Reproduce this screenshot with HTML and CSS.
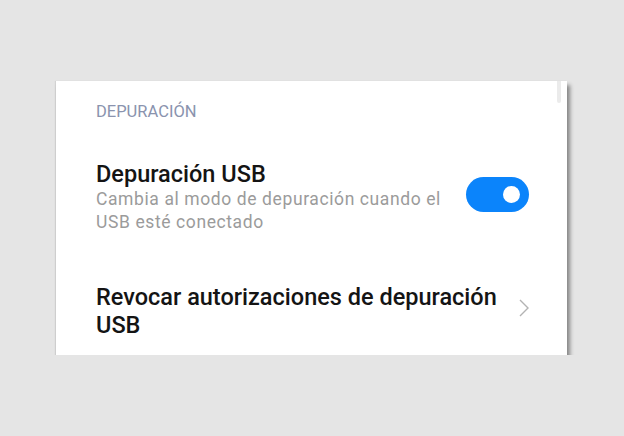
FILE: index.html
```html
<!DOCTYPE html>
<html lang="es">
<head>
  <meta charset="UTF-8" />
  <meta name="viewport" content="width=device-width, initial-scale=1.0"/>
  <title>Depuración</title>
  <link rel="stylesheet" href="styles.css">
</head>
<body>
  <div class="page">
    <div class="card">
      <div class="scrollbar"></div>
      <p class="section-title">DEPURACIÓN</p>

      <div class="row row-toggle">
        <div class="row-text">
          <p class="row-title">Depuración USB</p>
          <p class="row-sub">Cambia al modo de depuración cuando el USB esté conectado</p>
        </div>
        <div class="switch on"><span class="knob"></span></div>
      </div>

      <div class="row row-link">
        <div class="row-text">
          <p class="row-title">Revocar autorizaciones de depuración USB</p>
        </div>
        <svg class="chevron" width="10" height="18" viewBox="0 0 10 18">
          <path d="M1 1 L9 9 L1 17" fill="none" stroke="#b3b3b3" stroke-width="1.4"/>
        </svg>
      </div>
    </div>
  </div>
</body>
</html>
```

FILE: styles.css
```css
body {
  font-family: Roboto, 'Noto Sans', sans-serif;
  background-color: #e5e5e5;
  margin: 0;
  padding: 0;
}
p {
  margin: 0;
}
.page {
  padding: 81px 0 0 56px;
}
.card {
  position: relative;
  width: 511px;
  height: 274px;
  background-color: white;
  box-shadow: 3px 4px 4px rgba(0, 0, 0, 0.42), -1px 0 1px rgba(0, 0, 0, 0.08);
  padding: 21px 38px 0 40px;
  box-sizing: border-box;
}
.scrollbar {
  position: absolute;
  top: 0;
  right: 6px;
  width: 4px;
  height: 22px;
  border-radius: 0 0 2px 2px;
  background-color: #ebebeb;
}
.section-title {
  font-size: 16.5px;
  line-height: 20px;
  color: #8a93ae;
}
.row {
  display: flex;
  align-items: center;
  gap: 11px;
}
.row-text {
  flex: 1;
}
.row-toggle {
  margin-top: 38px;
}
.row-link {
  margin-top: 49px;
}
.row-title {
  font-size: 23.5px;
  line-height: 28px;
  font-weight: 500;
  color: #141414;
}
.row-sub {
  font-size: 17.5px;
  line-height: 23px;
  letter-spacing: 0.6px;
  color: #9b9b9b;
}
.switch {
  width: 63px;
  height: 35px;
  border-radius: 18px;
  background-color: #0b84fb;
  display: flex;
  align-items: center;
  justify-content: flex-end;
  padding-right: 9px;
  box-sizing: border-box;
  margin-bottom: 5px;
}
.knob {
  width: 17px;
  height: 17px;
  border-radius: 50%;
  background-color: white;
}
.chevron {
  margin-bottom: 7px;
}
```
